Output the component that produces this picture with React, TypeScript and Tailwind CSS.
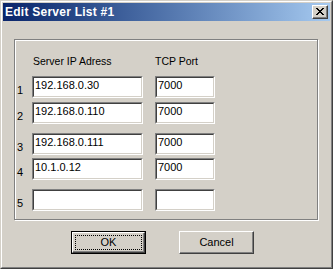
import React from "react";

const rows = [
  { n: "1", ip: "192.168.0.30", port: "7000", mt: "mt-[8px]" },
  { n: "2", ip: "192.168.0.110", port: "7000", mt: "mt-[4px]" },
  { n: "3", ip: "192.168.0.111", port: "7000", mt: "mt-[9px]" },
  { n: "4", ip: "10.1.0.12", port: "7000", mt: "mt-[3px]" },
  { n: "5", ip: "", port: "", mt: "mt-[9px]" },
];

function CloseGlyph() {
  return (
    <svg width="8" height="7" viewBox="0 0 8 7" shapeRendering="crispEdges">
      <path
        fill="#000"
        d="M0 0h2v1H0zM6 0h2v1H6zM1 1h2v1H1zM5 1h2v1H5zM2 2h4v1H2zM3 3h2v1H3zM2 4h4v1H2zM1 5h2v1H1zM5 5h2v1H5zM0 6h2v1H0zM6 6h2v1H6z"
      />
    </svg>
  );
}

function Field({ value, width }: { value: string; width: string }) {
  return (
    <div className={`${width} h-[22px] border border-t-[#808080] border-l-[#808080] border-r-white border-b-white`}>
      <div className="h-full bg-white border border-t-[#404040] border-l-[#404040] border-r-[#d4d0c8] border-b-[#d4d0c8] pl-[1px] pt-[1px] leading-[13px] text-black whitespace-nowrap overflow-hidden">
        {value}
      </div>
    </div>
  );
}

export default function App() {
  return (
    <div
      className="w-[333px] h-[269px] bg-[#d4d0c8] border border-t-[#d4d0c8] border-l-[#d4d0c8] border-r-[#404040] border-b-[#404040] text-[11px] text-black"
      style={{ fontFamily: '"Liberation Sans", Arial, sans-serif' }}
    >
      <div className="h-full flex flex-col p-px border border-t-white border-l-white border-r-[#808080] border-b-[#808080]">
        {/* caption */}
        <div className="h-[18px] flex items-start bg-gradient-to-r from-[#0a246a] to-[#a6caf0]">
          <span className="flex-1 pl-[2px] text-[12px] leading-[18px] font-bold tracking-[0.25px] text-white whitespace-nowrap">
            Edit Server List #1
          </span>
          <div className="mt-[2px] mr-[2px] w-[16px] h-[14px] bg-[#d4d0c8] border border-t-white border-l-white border-r-[#404040] border-b-[#404040] shadow-[inset_-1px_-1px_0_#808080] pl-[3px] pt-[2px]">
            <CloseGlyph />
          </div>
        </div>

        {/* group box */}
        <div className="ml-[11px] mt-[18px] w-[304px] h-[181px] border border-[#808080] shadow-[1px_1px_0_#fff,inset_1px_1px_0_#fff] pt-[15px]">
          <div className="flex pl-[17px] leading-[13px] text-[10.5px]">
            <span className="w-[123px] pl-[1px]">Server IP Adress</span>
            <span>TCP Port</span>
          </div>
          {rows.map((r) => (
            <div key={r.n} className={`flex ${r.mt}`}>
              <span className="w-[17px] pl-[2px] pt-[8px] leading-[13px]">{r.n}</span>
              <Field value={r.ip} width="w-[111px]" />
              <div className="ml-[12px]">
                <Field value={r.port} width="w-[60px]" />
              </div>
            </div>
          ))}
        </div>

        {/* buttons */}
        <div className="flex mt-[11px] ml-[68px] gap-[33px]">
          <div className="w-[75px] h-[23px] border border-black">
            <div className="h-full border border-t-white border-l-white border-r-[#404040] border-b-[#404040] shadow-[inset_-1px_-1px_0_#808080] p-[2px]">
              <div className="h-full border border-dotted border-black flex items-center justify-center leading-[13px]">
                OK
              </div>
            </div>
          </div>
          <div className="w-[75px] h-[23px] border border-t-white border-l-white border-r-[#404040] border-b-[#404040] shadow-[inset_-1px_-1px_0_#808080] flex items-center justify-center leading-[13px]">
            Cancel
          </div>
        </div>
      </div>
    </div>
  );
}
